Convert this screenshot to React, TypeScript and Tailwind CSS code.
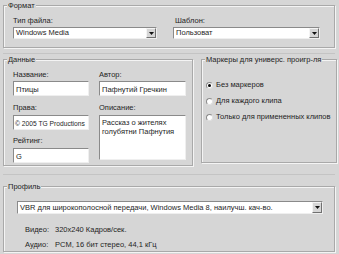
import React from "react";

const BG = "bg-[#d6d6d6]";

function Group({ label, className, children }: { label: string; className: string; children?: React.ReactNode }) {
  return (
    <div className={`relative border border-[#a9a9a9] shadow-[1px_1px_0_#f4f4f4,inset_1px_1px_0_#f4f4f4] ${className}`}>
      <span className={`absolute -top-[5px] left-[3px] px-[1px] leading-[9px] ${BG}`}>{label}</span>
      {children}
    </div>
  );
}

function Field({ className, children }: { className: string; children?: React.ReactNode }) {
  return (
    <div className={`bg-white border border-t-[#8a8a8a] border-l-[#8a8a8a] border-b-[#efefef] border-r-[#efefef] px-[2px] leading-[9px] ${className}`}>
      {children}
    </div>
  );
}

function Select({ value, className }: { value: string; className: string }) {
  return (
    <div className={`flex items-stretch bg-white border border-t-[#8a8a8a] border-l-[#8a8a8a] border-b-[#efefef] border-r-[#efefef] ${className}`}>
      <div className="flex-1 flex items-center px-[2px] whitespace-nowrap overflow-hidden">{value}</div>
      <div className={`w-[10px] flex items-center justify-center ${BG} border border-t-[#f4f4f4] border-l-[#f4f4f4] border-b-[#707070] border-r-[#707070]`}>
        <svg width="5" height="3" viewBox="0 0 5 3"><path d="M0 0h5L2.5 3z" fill="#111" /></svg>
      </div>
    </div>
  );
}

function Radio({ checked, label }: { checked?: boolean; label: string }) {
  return (
    <div className="flex items-center gap-[3px] h-[8px]">
      <div className="w-[7px] h-[7px] rounded-full bg-white border border-t-[#8a8a8a] border-l-[#8a8a8a] border-b-[#e0e0e0] border-r-[#e0e0e0] flex items-center justify-center">
        {checked && <div className="w-[3px] h-[3px] rounded-full bg-black" />}
      </div>
      <span className="leading-[8px] whitespace-nowrap">{label}</span>
    </div>
  );
}

export default function App() {
  return (
    <div className={`w-[339px] h-[254px] ${BG} text-[7.5px] text-[#1e1e1e] font-['Liberation_Sans',Arial,sans-serif] pt-[5px] pl-[3px] overflow-hidden`}>
      <Group label="Формат" className="w-[332px] h-[43px] flex gap-[16px] pl-[9px] pt-[11px]">
        <div className="flex flex-col gap-[2px]">
          <span className="leading-[8px]">Тип файла:</span>
          <Select value="Windows Media" className="w-[144px] h-[12px]" />
        </div>
        <div className="flex flex-col gap-[2px]">
          <span className="leading-[8px] pl-[2px]">Шаблон:</span>
          <Select value="Пользоват" className="w-[147px] h-[12px]" />
        </div>
      </Group>
      <div className="w-[332px] h-[1px] mt-[5px] bg-[#c4c4c4]" />
      <div className="flex gap-[8px] mt-[5px]">
        <Group label="Данные" className="w-[190px] h-[107px] flex gap-[10px] pl-[9px] pt-[11px]">
          <div className="flex flex-col">
            <span className="leading-[8px]">Название:</span>
            <Field className="w-[76px] h-[15px] mt-[2px] pt-[3px]">Птицы</Field>
            <span className="leading-[8px] mt-[8px]">Права:</span>
            <Field className="w-[76px] h-[15px] mt-[3px] pt-[3px] !pl-[1px] whitespace-nowrap overflow-hidden text-[6.7px]">© 2005 TG Productions</Field>
            <span className="leading-[8px] mt-[7px]">Рейтинг:</span>
            <Field className="w-[76px] h-[15px] mt-[3px] pt-[3px]">G</Field>
          </div>
          <div className="flex flex-col">
            <span className="leading-[8px]">Автор:</span>
            <Field className="w-[87px] h-[15px] mt-[2px] pt-[3px]">Пафнутий Гречкин</Field>
            <span className="leading-[8px] mt-[8px]">Описание:</span>
            <Field className="w-[87px] h-[45px] mt-[3px] pt-[2px]">Рассказ о жителях голубятни Пафнутия</Field>
          </div>
        </Group>
        <Group label="Маркеры для универс. проигр-ля" className="w-[136px] h-[104px] flex flex-col gap-[8px] pl-[4px] pt-[21px]">
          <Radio checked label="Без маркеров" />
          <Radio label="Для каждого клипа" />
          <Radio label="Только для примененных клипов" />
        </Group>
      </div>
      <div className="w-[332px] h-[1px] mt-[8px] bg-[#c4c4c4]" />
      <Group label="Профиль" className="w-[332px] h-[66px] mt-[11px] pl-[13px] pt-[14px]">
        <Select value="VBR для широкополосной передачи, Windows Media 8, наилучш. кач-во." className="w-[306px] h-[13px]" />
        <div className="grid grid-cols-[22px_auto] gap-x-[8px] gap-y-[7px] mt-[12px] pl-[8px] leading-[8px]">
          <span>Видео:</span>
          <span>320x240 Кадров/сек.</span>
          <span>Аудио:</span>
          <span>PCM, 16 бит стерео, 44,1 кГц</span>
        </div>
      </Group>
    </div>
  );
}
